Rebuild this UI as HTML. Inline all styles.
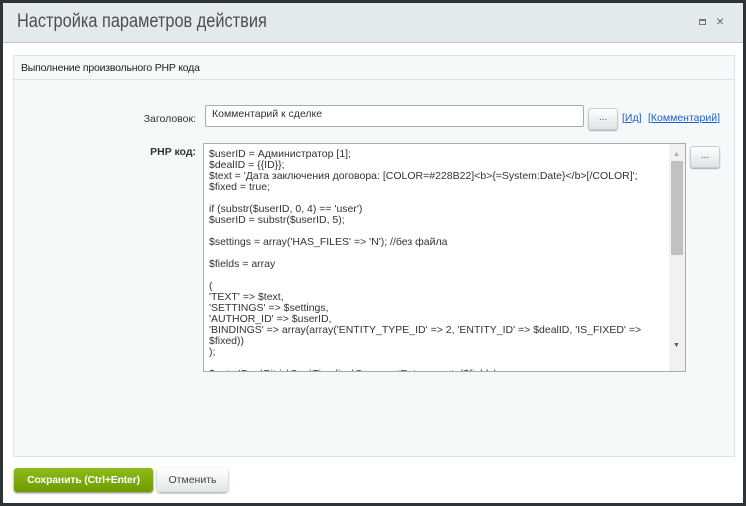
<!DOCTYPE html>
<html><head><meta charset="utf-8"><style>
*{box-sizing:border-box;margin:0;padding:0}
body{width:746px;height:506px;background:#2e3338;font-family:"Liberation Sans",Arial,sans-serif;position:relative;overflow:hidden}
.win{position:absolute;left:3px;top:3px;width:740px;height:500px;background:#fff}
.hd{position:absolute;left:0;top:0;width:740px;height:40px;background:#e3eaec;border-bottom:1px solid #bfc6c9}
.hd .t{position:absolute;left:14px;top:8px;font-size:19px;color:#4a4f52;transform:scaleX(0.86);transform-origin:left}
.panel{position:absolute;left:10px;top:52px;width:722px;height:402px;background:#f5f9f9;border:1px solid #dbe5e8}
.ptitle{height:24px;border-bottom:1px solid #dbe5e8;font-size:10.5px;color:#222;padding:6px 0 0 7px;letter-spacing:-0.2px}
.lab{position:absolute;font-size:10.5px;color:#333;text-align:right}
.ta{position:absolute;background:#fff;border:1px solid #a8acaf;font-size:10.5px;color:#333;padding:3px 6px;line-height:11px;overflow:hidden}
.btn{position:absolute;width:30px;height:22px;border-radius:3px;background:linear-gradient(#fff,#dde3e6);border:1px solid #c7ced1;box-shadow:0 1px 1px #aab;font-size:10px;text-align:center;color:#555;line-height:18px}
a{color:#1a5fcc;font-size:10.5px;position:absolute}
.sb{position:absolute;right:0;top:0;width:16px;height:100%;background:#f1f1f1}
</style></head><body>
<div class="win">
<div class="hd"><div class="t">Настройка параметров действия</div>
<div style="position:absolute;left:696px;top:16px;width:7px;height:6px;border:1px solid #777;border-top-width:2px"></div>
<div style="position:absolute;left:713px;top:10px;font-size:14px;color:#666">×</div></div>
<div class="panel"><div class="ptitle">Выполнение произвольного PHP кода</div></div>
<div class="lab" style="left:100px;top:110px;width:93px">Заголовок:</div>
<div class="ta" style="left:202px;top:102px;width:379px;height:22px;border-radius:2px">Комментарий к сделке</div>
<div class="btn" style="left:585px;top:105px">...</div>
<a style="left:619px;top:109px">[<u>Ид</u>]</a><a style="left:645px;top:109px">[<u>Комментарий</u>]</a>
<div class="lab" style="left:100px;top:143px;width:93px;font-weight:bold">PHP код:</div>
<div class="ta" style="left:200px;top:140px;width:483px;height:229px;padding:5px 20px 0 5px;white-space:pre">$userID = Администратор [1];
$dealID = {{ID}};
$text = 'Дата заключения договора: [COLOR=#228B22]&lt;b&gt;{=System:Date}&lt;/b&gt;[/COLOR]';
$fixed = true;

if (substr($userID, 0, 4) == 'user')
$userID = substr($userID, 5);

$settings = array('HAS_FILES' =&gt; 'N'); //без файла

$fields = array

(
'TEXT' =&gt; $text,
'SETTINGS' =&gt; $settings,
'AUTHOR_ID' =&gt; $userID,
'BINDINGS' =&gt; array(array('ENTITY_TYPE_ID' =&gt; 2, 'ENTITY_ID' =&gt; $dealID, 'IS_FIXED' =&gt;
$fixed))
);

$entryID = \Bitrix\Crm\Timeline\CommentEntry::create($fields);
<div class="sb"><div style="position:absolute;left:2px;top:17px;width:12px;height:94px;background:#c1c1c1"></div>
<div style="position:absolute;left:4px;top:5px;font-size:7px;color:#aaa">▲</div>
<div style="position:absolute;left:4px;top:196px;font-size:7px;color:#555">▼</div></div></div>
<div class="btn" style="left:687px;top:143px">...</div>
<div style="position:absolute;left:11px;top:465px;width:139px;height:24px;border-radius:3px;background:linear-gradient(#8fba1c,#6d9b00);color:#fff;font-size:10.5px;font-weight:bold;text-align:center;line-height:24px;box-shadow:0 1px 2px #777;letter-spacing:-0.2px">Сохранить (Ctrl+Enter)</div>
<div style="position:absolute;left:154px;top:465px;width:71px;height:24px;border-radius:3px;background:linear-gradient(#fff,#e1e6e8);color:#444;font-size:10.5px;text-align:center;line-height:24px;box-shadow:0 1px 2px #999">Отменить</div>
</div>
</body></html>
